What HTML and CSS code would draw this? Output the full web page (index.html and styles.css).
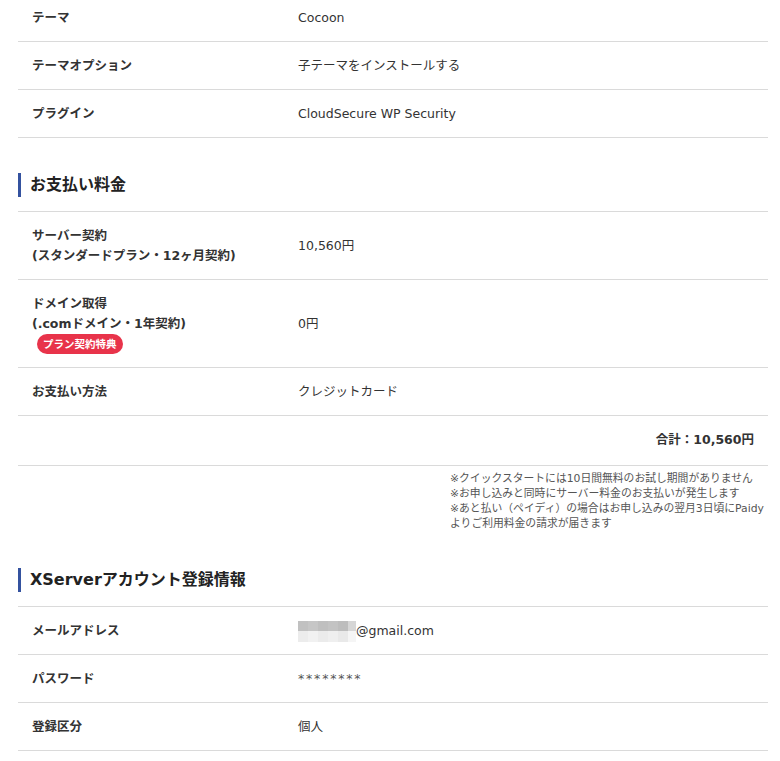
FILE: index.html
```html
<!doctype html>
<html lang="ja">
  <head>
    <meta charset="utf-8">
    <link rel="stylesheet" href="styles.css">
  </head>
  <body>
    <div class="confirm">
      <!-- WordPress -->
      <div class="table table-first">
        <div class="row">
          <div class="label">テーマ</div>
          <div class="value">Cocoon</div>
        </div>
        <div class="row">
          <div class="label">テーマオプション</div>
          <div class="value">子テーマをインストールする</div>
        </div>
        <div class="row">
          <div class="label">プラグイン</div>
          <div class="value">CloudSecure WP Security</div>
        </div>
      </div>

      <!-- 料金 -->
      <h2 class="heading">お支払い料金</h2>
      <div class="table">
        <div class="row">
          <div class="label">サーバー契約<br>(スタンダードプラン・12ヶ月契約)</div>
          <div class="value">10,560円</div>
        </div>
        <div class="row">
          <div class="label">
            ドメイン取得<br>(.comドメイン・1年契約)
            <div><span class="badge">プラン契約特典</span></div>
          </div>
          <div class="value">0円</div>
        </div>
        <div class="row">
          <div class="label">お支払い方法</div>
          <div class="value">クレジットカード</div>
        </div>
        <div class="total">合計：10,560円</div>
      </div>
      <p class="notes">
        ※クイックスタートには10日間無料のお試し期間がありません<br>
        ※お申し込みと同時にサーバー料金のお支払いが発生します<br>
        ※あと払い（ペイディ）の場合はお申し込みの翌月3日頃にPaidy<br>
        よりご利用料金の請求が届きます
      </p>

      <!-- アカウント -->
      <h2 class="heading">XServerアカウント登録情報</h2>
      <div class="table">
        <div class="row">
          <div class="label">メールアドレス</div>
          <div class="value">
            <svg class="mosaic" width="58" height="21" viewBox="0 0 58 21">
              <rect x="0" y="0" width="10" height="10" fill="#c1c1c1"/>
              <rect x="10" y="0" width="10" height="10" fill="#c6c6c6"/>
              <rect x="20" y="0" width="10" height="10" fill="#bfbfbf"/>
              <rect x="30" y="0" width="10" height="10" fill="#c3c3c3"/>
              <rect x="40" y="0" width="10" height="10" fill="#bdbdbd"/>
              <rect x="50" y="0" width="8" height="10" fill="#d6d6d6"/>
              <rect x="0" y="10" width="10" height="11" fill="#ececec"/>
              <rect x="10" y="10" width="10" height="11" fill="#f1f1f1"/>
              <rect x="20" y="10" width="10" height="11" fill="#ebebeb"/>
              <rect x="30" y="10" width="10" height="11" fill="#efefef"/>
              <rect x="40" y="10" width="10" height="11" fill="#e9e9e9"/>
              <rect x="50" y="10" width="8" height="11" fill="#f5f5f5"/>
            </svg>@gmail.com
          </div>
        </div>
        <div class="row">
          <div class="label">パスワード</div>
          <div class="value password">********</div>
        </div>
        <div class="row">
          <div class="label">登録区分</div>
          <div class="value">個人</div>
        </div>
      </div>
    </div>
  </body>
</html>
```

FILE: styles.css
```css
:root {
  --line: #dadada;
  --text: #333;
}

* {
  box-sizing: border-box;
}

body {
  margin: 0;
  background: #fff;
  color: var(--text);
  font-family: Verdana, "DejaVu Sans", "Noto Sans CJK JP", sans-serif;
  font-size: 12.5px;
}

.confirm {
  width: 750px;
  margin-left: 18px;
}

.table {
  border-top: 1px solid var(--line);
}

/* the page is scrolled a little, first row is cut */
.table-first {
  margin-top: -7px;
}

.row {
  display: grid;
  grid-template-columns: 266px 1fr;
  align-items: center;
  border-bottom: 1px solid var(--line);
}

.label,
.value {
  padding: 14px 14px 13px;
  line-height: 20px;
}

.label {
  font-weight: bold;
}

.password {
  letter-spacing: 1.8px;
  color: #555;
}

.badge {
  display: inline-block;
  height: 20px;
  padding: 0 6px;
  margin-left: 5px;
  border-radius: 10px;
  background-color: #e8334a;
  color: #fff;
  font-size: 10.5px;
  font-weight: bold;
  line-height: 20px;
}

.total {
  padding: 14px 14px 15px;
  line-height: 20px;
  text-align: right;
  font-weight: bold;
  border-bottom: 1px solid var(--line);
}

.notes {
  width: 318px;
  margin: 5px 0 0 auto;
  color: #555;
  font-size: 10.8px;
  line-height: 15px;
  white-space: nowrap;
}

.heading {
  margin: 35px 0 14px;
  padding-left: 9px;
  border-left: 3px solid #34529f;
  font-size: 16px;
  line-height: 24px;
  color: #222;
}

.notes + .heading {
  margin-top: 37px;
}

.mosaic {
  vertical-align: middle;
  margin: -1px 0;
}
```
